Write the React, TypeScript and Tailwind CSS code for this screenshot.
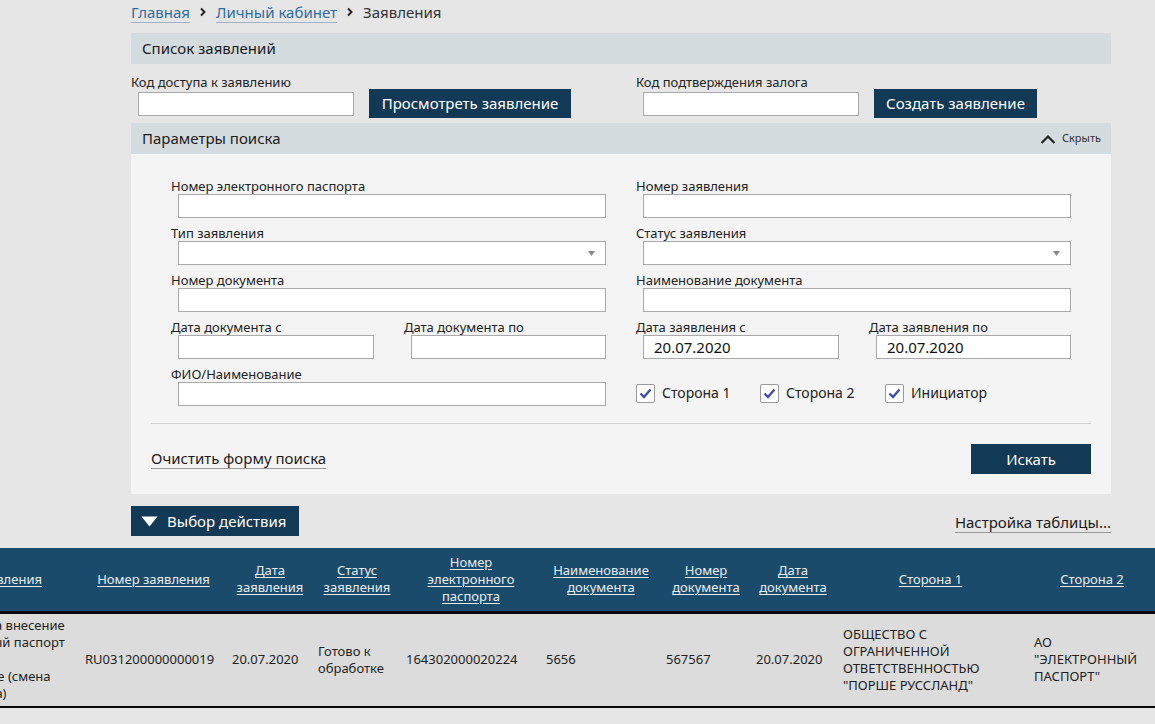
import React from "react";

const font = { fontFamily: '"Noto Sans", "Open Sans", sans-serif' };

function Input({ w = "w-[428px]", value }: { w?: string; value?: string }) {
  return (
    <div className={`${w} h-[24px] ml-[7px] bg-white border border-[#a9a9a9] flex items-center pl-[10px] text-[15px] text-[#111]`}>
      {value}
    </div>
  );
}

function Select() {
  return (
    <div className="w-[428px] h-[24px] ml-[7px] bg-white border border-[#a9a9a9] flex items-center justify-end pr-[10px]">
      <svg width="7" height="5" viewBox="0 0 7 5">
        <path d="M0 0 L7 0 L3.5 5 Z" fill="#8a8a8a" />
      </svg>
    </div>
  );
}

function Label({ children }: { children: React.ReactNode }) {
  return <div className="h-[16px] leading-[16px] text-[13px] text-[#222] whitespace-nowrap">{children}</div>;
}

function Field({ label, select, value }: { label: string; select?: boolean; value?: string }) {
  return (
    <div className="flex flex-col">
      <Label>{label}</Label>
      {select ? <Select /> : <Input value={value} />}
    </div>
  );
}

function DatePair({ a, b, va, vb }: { a: string; b: string; va?: string; vb?: string }) {
  return (
    <div className="flex">
      <div className="flex flex-col w-[233px]">
        <Label>{a}</Label>
        <Input w="w-[196px]" value={va} />
      </div>
      <div className="flex flex-col">
        <Label>{b}</Label>
        <Input w="w-[195px]" value={vb} />
      </div>
    </div>
  );
}

function Check({ label, w }: { label: string; w: string }) {
  return (
    <div className={`flex items-center ${w}`}>
      <div className="w-[19px] h-[19px] bg-white border border-[#9a9a9a] rounded-[2px] flex items-center justify-center">
        <svg width="13" height="11" viewBox="0 0 13 11">
          <path d="M1.5 5.5 L5 9 L11.5 1.5" fill="none" stroke="#3e4fae" strokeWidth="2.4" />
        </svg>
      </div>
      <span className="ml-[7px] text-[14px] text-[#222] leading-[18px]">{label}</span>
    </div>
  );
}

function Chevron() {
  return (
    <svg width="8" height="10" viewBox="0 0 8 10" className="mx-[9px] self-center">
      <path d="M2 1.5 L5.5 5 L2 8.5" fill="none" stroke="#222" strokeWidth="1.9" />
    </svg>
  );
}

const cols = [165, 147, 86, 88, 140, 120, 90, 84, 191, 132, 140];

const headers: React.ReactNode[] = [
  "Тип заявления",
  "Номер заявления",
  <>Дата<br />заявления</>,
  <>Статус<br />заявления</>,
  <>Номер<br />электронного<br />паспорта</>,
  <>Наименование<br />документа</>,
  <>Номер<br />документа</>,
  <>Дата<br />документа</>,
  "Сторона 1",
  "Сторона 2",
  "Инициатор",
];

const cells: React.ReactNode[] = [
  <>Заявление на внесение<br />в электронный паспорт<br />изменений<br />на изменение (смена<br />собственника)</>,
  "RU031200000000019",
  "20.07.2020",
  <>Готово к<br />обработке</>,
  "164302000020224",
  "5656",
  "567567",
  "20.07.2020",
  <>ОБЩЕСТВО С<br />ОГРАНИЧЕННОЙ<br />ОТВЕТСТВЕННОСТЬЮ<br />"ПОРШЕ РУССЛАНД"</>,
  <>АО<br />"ЭЛЕКТРОННЫЙ<br />ПАСПОРТ"</>,
  "",
];

export default function App() {
  return (
    <div className="min-h-[724px] bg-[#e6e6e6] text-[#222]" style={font}>
      <div className="pl-[131px] w-[1111px]">
        {/* breadcrumb */}
        <div className="h-[33px] flex items-start pt-[1px] text-[15px]">
          <div className="flex items-center h-[22px]">
            <a className="text-[#2e6da4] border-b border-[#9fb3c4] leading-[20px]">Главная</a>
            <Chevron />
            <a className="text-[#2e6da4] border-b border-[#9fb3c4] leading-[20px]">Личный кабинет</a>
            <Chevron />
            <span className="text-[#333] leading-[20px] pb-[1px]">Заявления</span>
          </div>
        </div>

        <div className="h-[31px] bg-[#d5dce0] flex items-center px-[11px] text-[15px] text-[#1a1a1a]">
          Список заявлений
        </div>

        {/* access codes */}
        <div className="flex pt-[12px] pb-[5px]">
          <div className="w-[505px] flex flex-col">
            <div className="h-[13px] leading-[13px] text-[13px] whitespace-nowrap">Код доступа к заявлению</div>
            <div className="flex items-start">
              <div className="w-[216px] h-[24px] ml-[7px] mt-[3px] bg-white border border-[#a9a9a9]" />
              <button className="ml-[15px] w-[202px] h-[29px] bg-[#123955] text-white text-[15px] flex items-center justify-center">
                Просмотреть заявление
              </button>
            </div>
          </div>
          <div className="flex flex-col">
            <div className="h-[13px] leading-[13px] text-[13px] whitespace-nowrap">Код подтверждения залога</div>
            <div className="flex items-start">
              <div className="w-[216px] h-[24px] ml-[7px] mt-[3px] bg-white border border-[#a9a9a9]" />
              <button className="ml-[15px] w-[163px] h-[29px] bg-[#123955] text-white text-[15px] flex items-center justify-center">
                Создать заявление
              </button>
            </div>
          </div>
        </div>

        <div className="h-[31px] bg-[#d5dce0] flex items-center justify-between px-[11px] pr-[10px] text-[15px] text-[#1a1a1a]">
          <span>Параметры поиска</span>
          <span className="flex items-center text-[11px] text-[#333]">
            <svg width="16" height="10" viewBox="0 0 16 10" className="mr-[6px]">
              <path d="M1.5 9 L8 2.5 L14.5 9" fill="none" stroke="#222" strokeWidth="2.2" />
            </svg>
            Скрыть
          </span>
        </div>

        {/* search panel */}
        <div className="bg-[#f4f4f4] pt-[24px] pb-[20px]">
          <div className="flex">
            <div className="w-[505px] pl-[40px] flex flex-col gap-[7px]">
              <Field label="Номер электронного паспорта" />
              <Field label="Тип заявления" select />
              <Field label="Номер документа" />
              <DatePair a="Дата документа с" b="Дата документа по" />
              <Field label="ФИО/Наименование" />
            </div>
            <div className="flex flex-col gap-[7px]">
              <Field label="Номер заявления" />
              <Field label="Статус заявления" select />
              <Field label="Наименование документа" />
              <DatePair a="Дата заявления с" b="Дата заявления по" va="20.07.2020" vb="20.07.2020" />
              <div className="flex flex-col">
                <div className="h-[15px]" />
                <div className="h-[24px] flex items-center">
                  <Check label="Сторона 1" w="w-[124px]" />
                  <Check label="Сторона 2" w="w-[125px]" />
                  <Check label="Инициатор" w="w-[120px]" />
                </div>
              </div>
            </div>
          </div>
          <div className="mx-[20px] mt-[17px] border-t border-[#d2d2d2]" />
          <div className="mx-[20px] mt-[20px] flex items-center justify-between">
            <span className="text-[15px] text-[#1a1a1a] border-b border-[#9a9a9a] leading-[19px]">Очистить форму поиска</span>
            <button className="w-[120px] h-[30px] bg-[#123955] text-white text-[15px]">Искать</button>
          </div>
        </div>

        {/* actions */}
        <div className="mt-[12px] flex items-end justify-between">
          <button className="w-[168px] h-[30px] bg-[#123955] text-white text-[15px] flex items-center pl-[10px]">
            <svg width="17" height="11" viewBox="0 0 17 11" className="mr-[9px]">
              <path d="M0.5 0.5 L16.5 0.5 L8.5 10.5 Z" fill="#fff" />
            </svg>
            Выбор действия
          </button>
          <span className="text-[15px] text-[#1a1a1a] border-b border-[#9a9a9a] leading-[19px] mb-[3px]">
            Настройка таблицы...
          </span>
        </div>
      </div>

      {/* table */}
      <div className="mt-[12px] w-[1155px] overflow-hidden">
        <table className="table-fixed border-collapse ml-[-89px]" style={{ width: cols.reduce((a, b) => a + b, 0) }}>
          <colgroup>
            {cols.map((w, i) => (
              <col key={i} style={{ width: i === 0 ? w + 4 : w }} />
            ))}
          </colgroup>
          <thead>
            <tr className="bg-[#1b4b6b] h-[64px] border-b-[3px] border-[#0a0a0a]">
              {headers.map((h, i) => (
                <th key={i} className="px-[5px] text-center font-normal text-[13px] leading-[17px] text-[#e6eef3] align-middle">
                  <span className="underline underline-offset-[2px] decoration-[#e6eef3]">{h}</span>
                </th>
              ))}
            </tr>
          </thead>
          <tbody>
            <tr className="bg-[#dcdcdc] h-[95px] border-b-[2px] border-[#0a0a0a]">
              {cells.map((c, i) => (
                <td
                  key={i}
                  className={`${i >= 8 ? "pl-[8px]" : "pl-[5px]"} pr-[4px] text-left text-[13px] leading-[17px] text-[#1e1e1e] align-middle whitespace-nowrap`}
                >
                  {c}
                </td>
              ))}
            </tr>
          </tbody>
        </table>
      </div>
    </div>
  );
}
